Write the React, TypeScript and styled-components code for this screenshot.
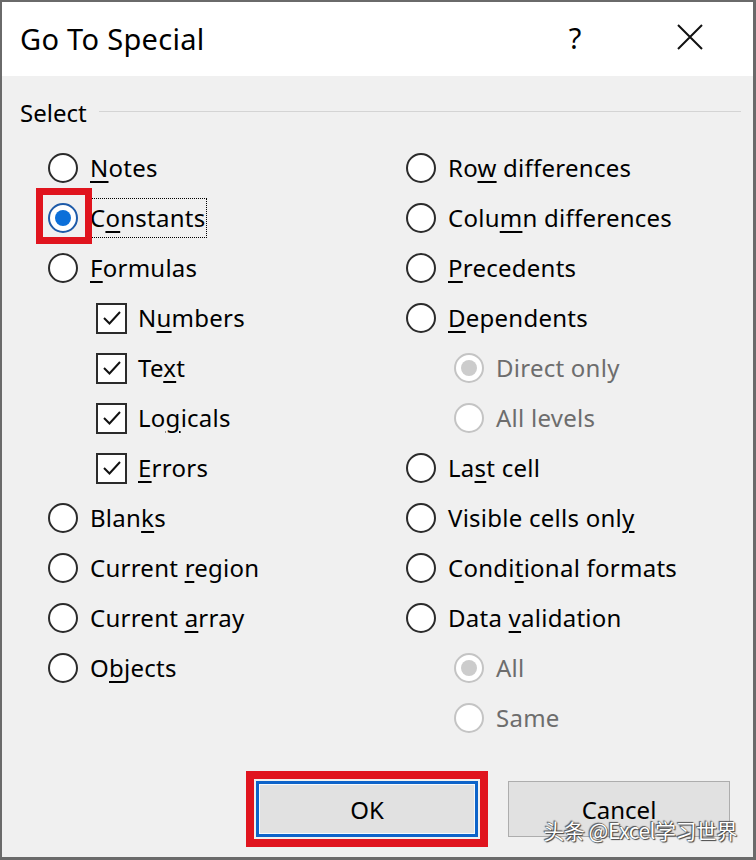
import React from "react";
import styled, { createGlobalStyle } from "styled-components";

const Global = createGlobalStyle`
  html, body { margin: 0; padding: 0; background: #ffffff; }
  body { font-family: "Noto Sans", "Segoe UI", sans-serif; }
`;

const Window = styled.div`
  position: relative;
  width: 756px;
  height: 860px;
  box-sizing: border-box;
  border: 2px solid #6a6a6a;
  border-right-width: 3px;
  border-bottom-width: 3px;
  background: #f0f0f0;
  display: flex;
  flex-direction: column;
  overflow: hidden;
`;

const TitleBar = styled.div`
  height: 74px;
  flex: none;
  background: #ffffff;
  display: flex;
  align-items: center;
  padding-left: 18px;
`;

const Title = styled.div`
  flex: 1;
  font-size: 29px;
  color: #000;
  letter-spacing: 0.3px;
  margin-top: -2px;
`;

const TitleButton = styled.div<{ $w: number }>`
  width: ${(p) => p.$w}px;
  height: 74px;
  display: flex;
  align-items: center;
  justify-content: center;
  font-size: 29px;
  color: #000;
  margin-top: -4px;
`;

const SectionHeader = styled.div`
  display: flex;
  align-items: center;
  height: 36px;
  margin-top: 18px;
  padding: 0 12px 0 18px;
  font-size: 24px;
  color: #000;
`;

const Rule = styled.div`
  flex: 1;
  height: 1px;
  background: #d4d4d4;
  margin-left: 12px;
  margin-top: -2px;
`;

const Columns = styled.div`
  display: grid;
  grid-template-columns: 358px 1fr;
  padding-left: 46px;
  margin-top: 13px;
`;

const Column = styled.div`
  display: flex;
  flex-direction: column;
`;

const Row = styled.div<{ $indent?: number; $gap?: number }>`
  height: 50px;
  display: flex;
  align-items: center;
  gap: ${(p) => p.$gap ?? 12}px;
  padding-left: ${(p) => p.$indent ?? 0}px;
`;

const RadioCircle = styled.span<{ $checked?: boolean; $disabled?: boolean }>`
  position: relative;
  flex: none;
  width: 30px;
  height: 30px;
  box-sizing: border-box;
  border-radius: 50%;
  background: #ffffff;
  border: 2px solid
    ${(p) => (p.$disabled ? "#c4c4c4" : p.$checked ? "#1d5aa8" : "#2b2b2b")};
  display: flex;
  align-items: center;
  justify-content: center;
  &::after {
    content: "";
    display: ${(p) => (p.$checked ? "block" : "none")};
    width: 16px;
    height: 16px;
    border-radius: 50%;
    background: ${(p) => (p.$disabled ? "#cccccc" : "#0c6fd9")};
  }
`;

const RedMark = styled.span`
  position: absolute;
  left: -14px;
  top: -17px;
  width: 56px;
  height: 56px;
  box-sizing: border-box;
  border: 7px solid #e0141e;
  pointer-events: none;
`;

const CheckBox = styled.span`
  flex: none;
  width: 31px;
  height: 31px;
  box-sizing: border-box;
  border: 2px solid #2b2b2b;
  background: #ffffff;
  display: flex;
  align-items: center;
  justify-content: center;
`;

const Label = styled.span<{ $disabled?: boolean; $focused?: boolean }>`
  font-size: 24px;
  line-height: 38px;
  letter-spacing: 0.25px;
  color: ${(p) => (p.$disabled ? "#6d6d6d" : "#000")};
  padding: 0 ${(p) => (p.$focused ? 1 : 0)}px;
  margin-left: ${(p) => (p.$focused ? -2 : 0)}px;
  border: ${(p) => (p.$focused ? "1px dotted #000" : "none")};
  u {
    text-decoration-thickness: 2px;
    text-underline-offset: 4px;
  }
`;

const ButtonBar = styled.div`
  margin-top: auto;
  display: flex;
  justify-content: flex-end;
  gap: 30px;
  padding: 0 23px 20px 0;
`;

const Button = styled.button<{ $default?: boolean }>`
  position: relative;
  width: 222px;
  height: 56px;
  box-sizing: border-box;
  font-family: "Noto Sans", "Segoe UI", sans-serif;
  font-size: 24px;
  color: #000;
  background: #e1e1e1;
  border: ${(p) => (p.$default ? "3px solid #0d63c9" : "1px solid #adadad")};
  box-shadow: ${(p) => (p.$default ? "inset 0 0 0 1px #f4f8fc" : "none")};
  outline: ${(p) => (p.$default ? "8px solid #e0141e" : "none")};
  outline-offset: 2px;
  padding: 0;
`;

const Watermark = styled.div`
  position: absolute;
  right: 16px;
  bottom: 12px;
  font-family: "Noto Sans CJK SC", "Noto Sans", sans-serif;
  font-size: 21px;
  color: #ffffff;
  letter-spacing: -0.5px;
  text-shadow: 0 0 1px #333, 1px 1px 1px #444, -1px -1px 1px #555;
  pointer-events: none;
`;

const Check = () => (
  <svg width="20" height="16" viewBox="0 0 20 16">
    <polyline points="2,8 7.5,13.5 18,2" fill="none" stroke="#111" strokeWidth="2" />
  </svg>
);

const CloseIcon = () => (
  <svg width="26" height="26" viewBox="0 0 26 26">
    <path d="M1 1 L25 25 M25 1 L1 25" stroke="#111" strokeWidth="2" fill="none" />
  </svg>
);

type Item = {
  pre: string;
  key?: string;
  post?: string;
  kind: "radio" | "check";
  checked?: boolean;
  disabled?: boolean;
  indent?: boolean;
  mark?: boolean;
  focused?: boolean;
};

const left: Item[] = [
  { pre: "", key: "N", post: "otes", kind: "radio" },
  { pre: "C", key: "o", post: "nstants", kind: "radio", checked: true, mark: true, focused: true },
  { pre: "", key: "F", post: "ormulas", kind: "radio" },
  { pre: "N", key: "u", post: "mbers", kind: "check", indent: true },
  { pre: "Te", key: "x", post: "t", kind: "check", indent: true },
  { pre: "Lo", key: "g", post: "icals", kind: "check", indent: true },
  { pre: "", key: "E", post: "rrors", kind: "check", indent: true },
  { pre: "Blan", key: "k", post: "s", kind: "radio" },
  { pre: "Current ", key: "r", post: "egion", kind: "radio" },
  { pre: "Current ", key: "a", post: "rray", kind: "radio" },
  { pre: "O", key: "b", post: "jects", kind: "radio" },
];

const right: Item[] = [
  { pre: "Ro", key: "w", post: " differences", kind: "radio" },
  { pre: "Colu", key: "m", post: "n differences", kind: "radio" },
  { pre: "", key: "P", post: "recedents", kind: "radio" },
  { pre: "", key: "D", post: "ependents", kind: "radio" },
  { pre: "Direct only", kind: "radio", disabled: true, checked: true, indent: true },
  { pre: "All levels", kind: "radio", disabled: true, indent: true },
  { pre: "La", key: "s", post: "t cell", kind: "radio" },
  { pre: "Visible cells onl", key: "y", kind: "radio" },
  { pre: "Condi", key: "t", post: "ional formats", kind: "radio" },
  { pre: "Data ", key: "v", post: "alidation", kind: "radio" },
  { pre: "All", kind: "radio", disabled: true, checked: true, indent: true },
  { pre: "Same", kind: "radio", disabled: true, indent: true },
];

const Option = ({ item }: { item: Item }) => (
  <Row $indent={item.indent ? 48 : 0} $gap={item.kind === "check" ? 11 : 12}>
    {item.kind === "radio" ? (
      <RadioCircle $checked={item.checked} $disabled={item.disabled}>
        {item.mark && <RedMark />}
      </RadioCircle>
    ) : (
      <CheckBox>
        <Check />
      </CheckBox>
    )}
    <Label $disabled={item.disabled} $focused={item.focused}>
      {item.pre}
      {item.key && <u>{item.key}</u>}
      {item.post}
    </Label>
  </Row>
);

const TitleButtons = styled.div`
  display: flex;
  align-items: center;
  gap: 57px;
  margin-right: 34px;
`;

export default function App() {
  return (
    <>
      <Global />
      <Window>
        <TitleBar>
          <Title>Go To Special</Title>
          <TitleButtons>
            <TitleButton $w={58}>?</TitleButton>
            <TitleButton $w={58}>
              <CloseIcon />
            </TitleButton>
          </TitleButtons>
        </TitleBar>
        <SectionHeader>
          Select
          <Rule />
        </SectionHeader>
        <Columns>
          <Column>
            {left.map((it, i) => (
              <Option key={i} item={it} />
            ))}
          </Column>
          <Column>
            {right.map((it, i) => (
              <Option key={i} item={it} />
            ))}
          </Column>
        </Columns>
        <ButtonBar>
          <Button $default>OK</Button>
          <Button>Cancel</Button>
        </ButtonBar>
        <Watermark>头条 @Excel学习世界</Watermark>
      </Window>
    </>
  );
}
